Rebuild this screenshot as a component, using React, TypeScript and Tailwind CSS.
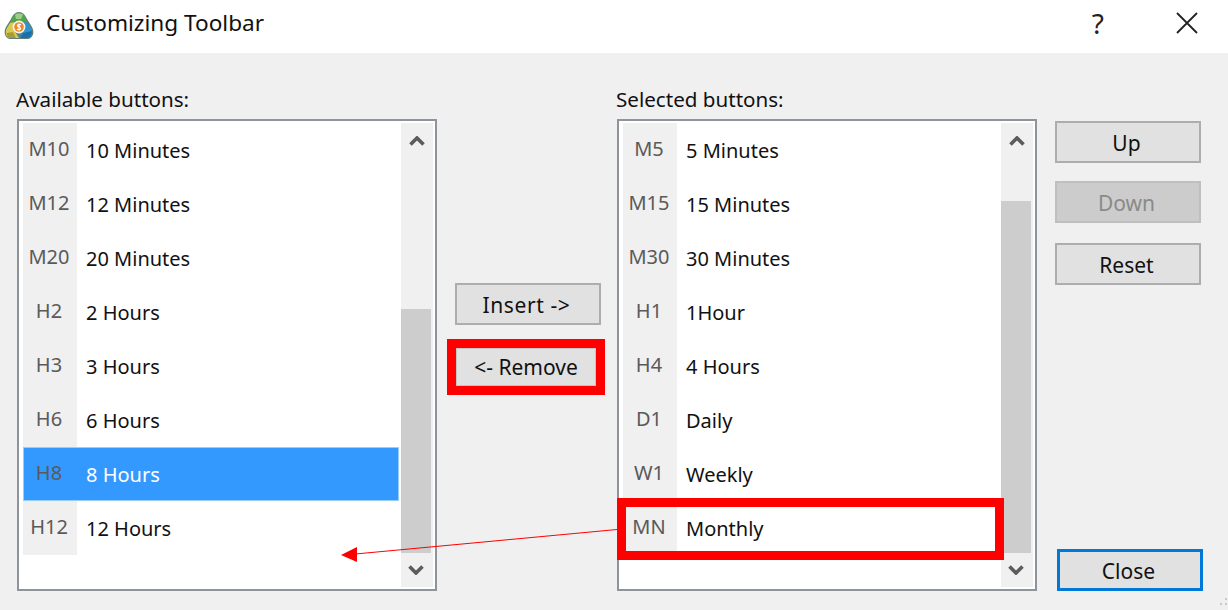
import React from "react";

type Row = { code: string; label: string; selected?: boolean };

const leftRows: Row[] = [
  { code: "M10", label: "10 Minutes" },
  { code: "M12", label: "12 Minutes" },
  { code: "M20", label: "20 Minutes" },
  { code: "H2", label: "2 Hours" },
  { code: "H3", label: "3 Hours" },
  { code: "H6", label: "6 Hours" },
  { code: "H8", label: "8 Hours", selected: true },
  { code: "H12", label: "12 Hours" },
];

const rightRows: Row[] = [
  { code: "M5", label: "5 Minutes" },
  { code: "M15", label: "15 Minutes" },
  { code: "M30", label: "30 Minutes" },
  { code: "H1", label: "1Hour" },
  { code: "H4", label: "4 Hours" },
  { code: "D1", label: "Daily" },
  { code: "W1", label: "Weekly" },
  { code: "MN", label: "Monthly" },
];

function Chevron({ down }: { down?: boolean }) {
  return (
    <svg width="16" height="10" viewBox="0 0 16 10" className="block">
      <path
        d={down ? "M1.5 1.5 L8 8 L14.5 1.5" : "M1.5 8.5 L8 2 L14.5 8.5"}
        fill="none"
        stroke="#5c5c5c"
        strokeWidth="3.6"
      />
    </svg>
  );
}

function Scrollbar({ thumbTop, thumbHeight }: { thumbTop: string; thumbHeight: string }) {
  return (
    <div className="w-[32px] h-[464px] bg-[#f0f0f0] flex flex-col shrink-0">
      <div className={`w-[30px] ${thumbTop} relative`}>
        <div className="absolute left-[8px] top-[13px]">
          <Chevron />
        </div>
      </div>
      <div className={`w-[30px] ${thumbHeight} bg-[#cdcdcd]`} />
      <div className="w-[30px] flex-1 flex items-center justify-center">
        <Chevron down />
      </div>
    </div>
  );
}

function ListRow({ row }: { row: Row }) {
  return (
    <div
      className={`flex h-[54px] w-[376px] ${
        row.selected ? "bg-[#3399ff] ring-1 ring-inset ring-[#99ccff]" : ""
      }`}
    >
      <div
        className={`w-[54px] shrink-0 flex justify-center pt-[12px] pr-[2px] text-[#5a5a5a] ${
          row.selected ? "" : "bg-[#f0f0f0]"
        }`}
      >
        {row.code}
      </div>
      <div className={`pl-[9px] pt-[14px] ${row.selected ? "text-white" : "text-[#111111]"}`}>
        {row.label}
      </div>
    </div>
  );
}

function ListBox({
  rows,
  thumbTop,
  thumbHeight,
  children,
}: {
  rows: Row[];
  thumbTop: string;
  thumbHeight: string;
  children?: React.ReactNode;
}) {
  return (
    <div className="relative w-[420px] h-[472px] border-2 border-[#8f949b] bg-white flex pt-[2px] pl-[4px] leading-[28px] text-[20px]">
      <div className="w-[378px] shrink-0">
        {rows.map((r) => (
          <ListRow key={r.code} row={r} />
        ))}
      </div>
      <Scrollbar thumbTop={thumbTop} thumbHeight={thumbHeight} />
      {children}
    </div>
  );
}

function Btn({
  label,
  className,
  disabled,
}: {
  label: string;
  className: string;
  disabled?: boolean;
}) {
  return (
    <div
      className={`w-[146px] h-[42px] border-2 flex items-center justify-center pt-[3px] pr-[3px] ${
        disabled
          ? "bg-[#cccccc] border-[#bfbfbf] text-[#8a8a8a]"
          : "bg-[#e1e1e1] border-[#adadad] text-[#111111]"
      } ${className}`}
    >
      {label}
    </div>
  );
}

function Logo() {
  return (
    <svg width="30" height="30" viewBox="0 0 30 30" className="block">
      <path
        d="M15 1 C19 1 21 4 23 8 L28 16 C31 21 29 28 23 28 L7 28 C1 28 -1 21 2 16 L7 8 C9 4 11 1 15 1 Z"
        fill="#5f7f78"
      />
      <path d="M15 2 C19 2 20.5 5 22 8 L24 12 C21 10.5 18 10 15 10.5 C12 10 9 10.5 6 12 L8 8 C9.5 5 11 2 15 2 Z" fill="#4fa64c" />
      <path d="M11 3.5 C13 2.2 17 2.2 19 3.5 L17 8 L12 8 Z" fill="#9ad083" />
      <path d="M6 12 C8 11 10 11 11 12 L10.5 20 L15 27 L7 27 C2 27 0.5 22 3 17 Z" fill="#d9cb4f" />
      <path d="M2.5 22 L9 21 L12 27 L6 27 C4 27 3 25 2.5 22 Z" fill="#a89a35" />
      <path d="M24 12 C22 11 20 11 19 12 L19.5 20 L15 27 L23 27 C28 27 29.5 22 27 17 Z" fill="#2f93cf" />
      <path d="M19 22 L28 20 C28 24 26 27 23 27 L16 27 Z" fill="#1b6fa8" />
      <circle cx="15" cy="16" r="6.4" fill="#f5f5f5" />
      <circle cx="15" cy="16" r="4.8" fill="#ee8a26" />
      <path d="M17 13.8 C15 12.8 13 13.6 13.6 15.2 C14 16.4 16.6 15.8 16.6 17.4 C16.6 18.8 14.6 19 13 18.2 M15 12.4 V19.6" stroke="#ffffff" strokeWidth="1.1" fill="none" />
    </svg>
  );
}

export default function App() {
  return (
    <div
      className="relative w-[1228px] h-[610px] overflow-hidden bg-[#f0f0f0] flex flex-col text-[21px]"
      style={{ fontFamily: '"Noto Sans", "DejaVu Sans", sans-serif' }}
    >
      <div className="h-[53px] bg-white flex items-center shrink-0 pb-[7px]">
        <div className="ml-[4px] w-[30px] mt-[6px]">
          <Logo />
        </div>
        <div className="ml-[12px] text-[22.6px] text-[#111111]">Customizing Toolbar</div>
        <div className="ml-auto text-[28px] text-[#222222] mr-[72px] leading-none">?</div>
        <svg width="22" height="22" viewBox="0 0 22 22" className="mr-[30px]">
          <path d="M1 1 L21 21 M21 1 L1 21" stroke="#222222" strokeWidth="1.8" fill="none" />
        </svg>
      </div>

      <div className="flex pl-[17px] flex-1">
        <div className="w-[420px] shrink-0">
          <div className="h-[66px] flex items-end pb-[4px] -ml-[1px] text-[20.6px] text-[#111111]">Available buttons:</div>
          <ListBox rows={leftRows} thumbTop="h-[186px]" thumbHeight="h-[244px]" />
        </div>

        <div className="w-[180px] shrink-0 pt-[230px]">
          <Btn label="Insert ->" className="ml-[18px] tracking-[0.6px]" />
          <div className="ml-[10px] mt-[14px] w-[158px] h-[56px] border-[9px] border-[#ff0000] bg-[#e1e1e1] ring-1 ring-inset ring-[#c4c4c4] flex items-center justify-center pt-[1px] text-[#111111]">
            {"<- Remove"}
          </div>
        </div>

        <div className="w-[420px] shrink-0">
          <div className="h-[66px] flex items-end pb-[4px] -ml-[1px] text-[20.6px] text-[#111111]">Selected buttons:</div>
          <ListBox rows={rightRows} thumbTop="h-[78px]" thumbHeight="h-[352px]">
            <div className="absolute left-[-2px] top-[377px] w-[387px] h-[62px] border-[9px] border-[#ff0000]" />
          </ListBox>
        </div>

        <div className="pl-[18px] pt-[68px] flex flex-col">
          <Btn label="Up" className="" />
          <Btn label="Down" className="mt-[18px]" disabled />
          <Btn label="Reset" className="mt-[20px]" />
          <div className="ml-[2px] mt-[264px] w-[146px] h-[42px] border-[3px] border-[#0078d7] bg-[#e1e1e1] flex items-center justify-center pt-[3px] pr-[3px] text-[#111111]">
            Close
          </div>
        </div>
      </div>

      <svg width="1228" height="610" viewBox="0 0 1228 610" className="absolute left-0 top-0 pointer-events-none">
        <line x1="617" y1="529.5" x2="350" y2="554.5" stroke="#ff0000" strokeWidth="1" />
        <path d="M341 555 L357 547 L357 562 Z" fill="#ff0000" />
        <path d="M1225 598 h2 v2 h-2 Z M1225 603 h2 v2 h-2 Z M1220 603 h2 v2 h-2 Z" fill="#c8c8c8" />
      </svg>
    </div>
  );
}
